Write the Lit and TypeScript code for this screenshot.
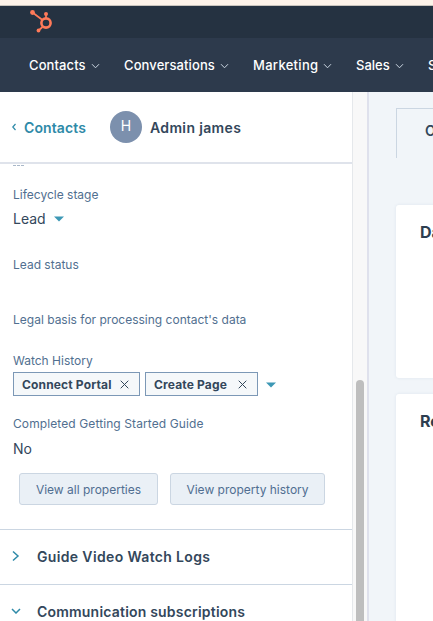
import { LitElement, html, css } from "lit";
import { customElement } from "lit/decorators.js";

const chev = html`<svg class="nav-chev" viewBox="0 0 9 6" width="9" height="6"><path d="M1 1.2 L4.5 4.8 L8 1.2" fill="none" stroke="#cbd6e2" stroke-width="1"/></svg>`;
const xIcon = html`<svg class="x" viewBox="0 0 9 9" width="9" height="9"><path d="M.7.7l7.6 7.6M8.3.7L.7 8.3" fill="none" stroke="#33475b" stroke-width="1"/></svg>`;
const caret = html`<svg class="caret" viewBox="0 0 10 6" width="10" height="6"><path d="M0 .5h10L5 5.5z" fill="#3d98b5"/></svg>`;

@customElement("app-root")
export class AppRoot extends LitElement {
  static styles = css`
    :host { display: block; width: 433px; height: 621px; overflow: hidden; font-family: Inter, "Noto Sans", sans-serif; color: #33475b; background: #fff; }
    .strip { height: 5px; background: #fdf3e9; border-bottom: 1px solid #c9c4bd; }
    .topbar { height: 32px; background: #253241; padding-left: 30px; box-sizing: border-box; display: flex; align-items: flex-start; padding-top: 3px; }
    .nav { height: 54px; background: #2d3a4c; display: flex; align-items: center; padding-left: 29px; color: #fff; font-size: 13px; font-weight: 500; white-space: nowrap; overflow: hidden; }
    .nav-item { display: flex; align-items: center; gap: 5px; margin-right: 25px; flex: none; }
    .n1 { width: 70px; letter-spacing: .1px; }
    .n2 { width: 104px; letter-spacing: .1px; }
    .n3 { width: 78px; letter-spacing: .3px; }
    .n4 { width: 47px; }
    .nav-chev { margin-top: 2px; flex: none; }
    .main { display: flex; height: 529px; }
    .panel { width: 353px; flex: none; overflow: hidden; border-right: 1px solid #e5e8eb; box-sizing: border-box; }
    .head { height: 72px; box-sizing: border-box; border-bottom: 2px solid #dfe3eb; display: flex; align-items: center; padding-left: 12px; }
    .back { color: #2e8aa8; font-size: 14px; font-weight: 600; display: flex; align-items: center; gap: 8px; width: 98px; letter-spacing: .1px; }
    .avatar { width: 32px; height: 32px; border-radius: 50%; background: #7c90ad; color: #fff; font-size: 14px; display: flex; align-items: center; justify-content: center; margin-right: 8px; flex: none; padding-bottom: 3px; box-sizing: border-box; }
    .name { font-size: 14px; font-weight: 600; color: #33475b; letter-spacing: .35px; }
    .body { padding: 23px 0 0 13px; position: relative; }
    .dash { position: absolute; left: 13px; top: 1px; width: 11px; height: 1px; border-top: 1px dashed #a9b8c9; }
    .label { font-size: 12px; line-height: 16px; color: #516f90; white-space: nowrap; }
    .value { font-size: 14px; line-height: 20px; color: #33475b; display: flex; align-items: center; gap: 8px; }
    .v1 { margin-top: 6px; }
    .l2 { margin-top: 28px; }
    .l3 { margin-top: 39px; }
    .l4 { margin-top: 25px; }
    .chips { display: flex; align-items: center; margin-top: 3px; gap: 5px; height: 24px; }
    .chip { height: 24px; box-sizing: border-box; border: 1px solid #7c98b6; background: #f5f8fa; display: flex; align-items: center; padding-left: 8px; font-size: 12px; font-weight: 700; color: #33475b; justify-content: space-between; padding-right: 10px; white-space: nowrap; letter-spacing: .15px; }
    .c1 { width: 127px; }
    .c2 { width: 113px; }
    .caret2 { margin-left: 3px; margin-top: 2px; }
    .l5 { margin-top: 20px; letter-spacing: .1px; }
    .v5 { margin-top: 7px; }
    .buttons { display: flex; gap: 12px; margin: 14px 0 0 6px; }
    .btn { height: 32px; box-sizing: border-box; background: #eaf0f6; border: 1px solid #cbd6e2; border-radius: 3px; display: flex; align-items: center; justify-content: center; font-size: 12px; color: #506e91; white-space: nowrap; }
    .b1 { width: 139px; }
    .b2 { width: 155px; }
    .sec { border-top: 1px solid #cbd6e2; box-sizing: border-box; display: flex; align-items: center; font-size: 14px; font-weight: 600; color: #33475b; padding-left: 11px; gap: 17px; padding-bottom: 2px; }
    .sec svg { flex: none; width: 9px; }
    .sec1 { margin-top: 24px; height: 55px; letter-spacing: .35px; }
    .sec2 { height: 55px; gap: 16px; letter-spacing: .2px; }
    .track { width: 14px; flex: none; background: #f8f8f8; position: relative; }
    .thumb { position: absolute; left: 3px; top: 288px; width: 8px; height: 260px; border-radius: 4px; background: #bebebe; }
    .right { flex: 1; background: #f1f5f9; border-left: 2px solid #dfe1ec; padding-left: 27px; min-width: 0; overflow: hidden; }
    .tab { margin-top: 16px; height: 50px; width: 60px; box-sizing: border-box; border: 1px solid #cbd6e2; border-bottom: none; border-right: none; padding: 13px 0 0 28px; font-size: 14px; font-weight: 600; overflow: hidden; white-space: nowrap; }
    .card { background: #fff; border-radius: 3px 0 0 3px; width: 60px; box-sizing: border-box; box-shadow: 0 0 3px rgba(200,210,225,.45); font-size: 16px; font-weight: 700; color: #2d3e50; padding: 17px 0 0 24px; overflow: hidden; white-space: nowrap; }
    .card1 { margin-top: 47px; height: 173px; }
    .card2 { margin-top: 16px; height: 240px; }
  `;

  render() {
    return html`
      <div class="strip"></div>
      <div class="topbar">
        <svg width="24" height="26" viewBox="0 0 24 26">
          <g fill="none" stroke="#ff7a59">
            <circle cx="16" cy="14" r="4.6" stroke-width="2.6"/>
            <path d="M16 9V5M12.5 11 2.5 3.5M12.5 18l-4 3.5" stroke-width="1.7"/>
          </g>
          <g fill="#ff7a59"><circle cx="16" cy="5" r="2"/><circle cx="2.5" cy="3.5" r="2.4"/><circle cx="8.5" cy="21.5" r="1.9"/></g>
        </svg>
      </div>
      <div class="nav">
        <div class="nav-item n1">Contacts ${chev}</div>
        <div class="nav-item n2">Conversations ${chev}</div>
        <div class="nav-item n3">Marketing ${chev}</div>
        <div class="nav-item n4">Sales ${chev}</div>
        <div class="nav-item">Service</div>
      </div>
      <div class="main">
        <div class="panel">
          <div class="head">
            <div class="back">
              <svg width="4" height="8" viewBox="0 0 4 8"><path d="M3.5 1 .8 4l2.7 3" fill="none" stroke="#2e8aa8" stroke-width="1.2"/></svg>
              Contacts
            </div>
            <div class="avatar">H</div>
            <div class="name">Admin james</div>
          </div>
          <div class="body">
            <div class="dash"></div>
            <div class="label">Lifecycle stage</div>
            <div class="value v1">Lead ${caret}</div>
            <div class="label l2">Lead status</div>
            <div class="label l3">Legal basis for processing contact's data</div>
            <div class="label l4">Watch History</div>
            <div class="chips">
              <div class="chip c1">Connect Portal ${xIcon}</div>
              <div class="chip c2">Create Page ${xIcon}</div>
              <svg class="caret2" viewBox="0 0 10 6" width="10" height="6"><path d="M0 .5h10L5 5.5z" fill="#3d98b5"/></svg>
            </div>
            <div class="label l5">Completed Getting Started Guide</div>
            <div class="value v5">No</div>
            <div class="buttons">
              <div class="btn b1">View all properties</div>
              <div class="btn b2">View property history</div>
            </div>
          </div>
          <div class="sec sec1">
            <svg viewBox="0 0 9 12" height="12"><path d="M2 1.5 7 6l-5 4.5" fill="none" stroke="#2e8aa8" stroke-width="1.5"/></svg>
            Guide Video Watch Logs
          </div>
          <div class="sec sec2">
            <svg viewBox="0 0 9 6" height="6" style="width:10px"><path d="M.5 1 4.5 5l4-4" fill="none" stroke="#2e8aa8" stroke-width="1.5"/></svg>
            Communication subscriptions
          </div>
        </div>
        <div class="track"><div class="thumb"></div></div>
        <div class="right">
          <div class="tab">Overview</div>
          <div class="card card1">Data</div>
          <div class="card card2">Recent</div>
        </div>
      </div>
    `;
  }
}
